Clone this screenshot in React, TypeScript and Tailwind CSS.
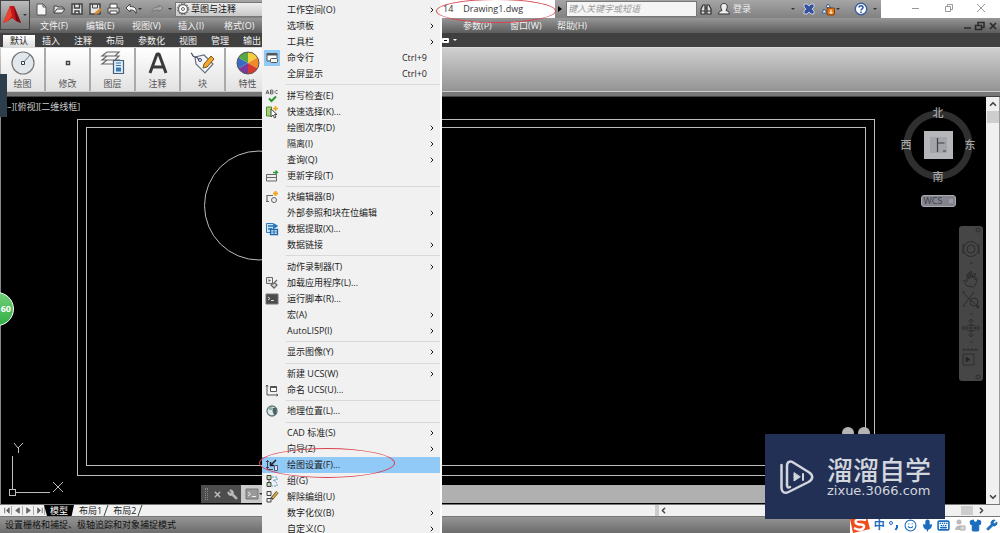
import type { ReactNode } from 'react';
import { ChevronDown, ChevronRight, ChevronUp, ChevronLeft, Keyboard, Mic, Shirt, Smile, Wrench, X } from 'lucide-react';

type IconName = keyof typeof menuIcons;

type MenuEntry = {
  label: string;
  icon?: IconName;
  shortcut?: string;
  submenu?: boolean;
  active?: boolean;
  checked?: boolean;
};

const menuIcons = {
  command: (
    <>
      <path d="M2 10V2.5h10V7" fill="#fff" stroke="#555" />
      <path d="M2 3.5h10" stroke="#555" strokeWidth="2" />
      <path d="M2 10h3" stroke="#555" />
      <rect x="5.5" y="7.5" width="7" height="4" rx="1" fill="#f4f4f4" stroke="#555" />
    </>
  ),
  spell: (
    <>
      <path d="M1 5l1.5-4L4 5M1.5 4h2M5.5 1v4h2l.7-1-.7-1h-2M7.5 3l.5-1-.5-1h-2M12.5 1.5H11l-1 1v1l1 1h1.5" stroke="#555" strokeWidth=".9" />
      <path d="M4 9.5L6.500 12 11 7.500" stroke="#27952c" strokeWidth="2" />
    </>
  ),
  quick: (
    <>
      <path d="M1.500 2h5v9h-5z" fill="#a6cf7b" stroke="#4c8d2d" />
      <path d="M6 4v8l2-2 1.500 3 1.500-1-1.500-2.500H12z" fill="#fff" stroke="#444" />
      <path d="M10.500 1v5M8 3.500h5" stroke="#e9a51f" strokeWidth="1.500" />
    </>
  ),
  field: (
    <>
      <path d="M1.500 5.500h10v3h-10zM1.500 8.500h10v3.500h-10z" fill="#eee" stroke="#666" />
      <path d="M8 3.500h4M10.500 1.500l2 2-2 1.500" stroke="#2f9b38" strokeWidth="1.300" />
    </>
  ),
  block: (
    <>
      <path d="M2 12V5.500h6M1 11.500h3" stroke="#666" strokeWidth="1.200" />
      <circle cx="9" cy="10" r="2.500" fill="#eee" stroke="#666" />
      <path d="M10.500 1v5M8 3.500h5" stroke="#f0a51c" strokeWidth="1.800" />
    </>
  ),
  extract: (
    <>
      <path d="M1.500 1.500h7v9h-7z" fill="#cfe5f7" stroke="#2f7cc0" />
      <path d="M3 4h8M9 2l3 2-3 2M3 7h4" stroke="#2272b9" strokeWidth="1.300" />
      <path d="M5.500 7.500h7v5h-7z" fill="#fff" stroke="#1b67af" strokeWidth="1.300" />
      <path d="M5.500 10h7M9 7.500v5" stroke="#1b67af" />
    </>
  ),
  load: (
    <>
      <path d="M1.500 1.500h6v6h-6z" fill="#eee" stroke="#666" />
      <path d="M3.500 3v3L6 4.500z" fill="#666" />
      <path d="M8 8l4-4M6 9l3 3 3-3-2.500-2.500z" fill="#ddd" stroke="#666" strokeWidth="1.300" />
    </>
  ),
  script: (
    <>
      <path d="M1 2h12v10H1z" fill="#4c4c4c" stroke="#777" />
      <path d="M3 5l2 1.500L3 8M6 8.500h3" stroke="#ddd" />
    </>
  ),
  ucs: (
    <>
      <path d="M2 2v10h11M1 3.500L2 2l1 1.500M11.500 11l1.500 1-1.500 1" stroke="#555" />
      <path d="M5.500 3.500h6v5h-6z" fill="#fff" stroke="#555" />
      <path d="M5.500 4h6" stroke="#555" strokeWidth="2" />
    </>
  ),
  globe: (
    <>
      <circle cx="7" cy="7" r="5" fill="#dfe8ea" stroke="#64777c" strokeWidth="1.300" />
      <path d="M3 4l3-1 2 1-1 2H4z" fill="#8fb0ac" />
      <path d="M8 4h3.500v6L9 11 7.500 7z" fill="#4c6468" />
    </>
  ),
  settings: (
    <>
      <path d="M2.500 2v9.500H8M1 3.500h3M1 9.500h3" stroke="#445" />
      <path d="M11 2L6 7M5.500 4v3.500H9" stroke="#222" strokeWidth="1.500" />
      <path d="M9.500 7.500h3v5h-3z" fill="#cfe6f7" stroke="#557" />
    </>
  ),
  group: (
    <>
      <path d="M2 1.500h4v4H2zM2 8.500h4v4H2z" fill="#b9d9a5" stroke="#444" />
      <path d="M4 5.500v3" stroke="#444" />
      <path d="M7 3h5v3H8l4 3v3H7" stroke="#5f9ac7" strokeDasharray="2 1" />
    </>
  ),
  ungroup: (
    <>
      <path d="M2 1.500h4v4H2zM2 8.500h4v3.500H2z" fill="#eee" stroke="#444" />
      <path d="M12.500 2L6.500 9" stroke="#5b4a2c" strokeWidth="3" />
      <path d="M12.500 2L7.500 8" stroke="#eab54b" strokeWidth="1.500" />
    </>
  ),
};

const menuGroups: MenuEntry[][] = [
  [
    { label: '工作空间(O)', submenu: true },
    { label: '选项板', submenu: true },
    { label: '工具栏', submenu: true },
    { label: '命令行', icon: 'command', shortcut: 'Ctrl+9', checked: true },
    { label: '全屏显示', shortcut: 'Ctrl+0' },
  ],
  [
    { label: '拼写检查(E)', icon: 'spell' },
    { label: '快速选择(K)...', icon: 'quick' },
    { label: '绘图次序(D)', submenu: true },
    { label: '隔离(I)', submenu: true },
    { label: '查询(Q)', submenu: true },
    { label: '更新字段(T)', icon: 'field' },
  ],
  [
    { label: '块编辑器(B)', icon: 'block' },
    { label: '外部参照和块在位编辑', submenu: true },
    { label: '数据提取(X)...', icon: 'extract' },
    { label: '数据链接', submenu: true },
  ],
  [
    { label: '动作录制器(T)', submenu: true },
    { label: '加载应用程序(L)...', icon: 'load' },
    { label: '运行脚本(R)...', icon: 'script' },
    { label: '宏(A)', submenu: true },
    { label: 'AutoLISP(I)', submenu: true },
  ],
  [{ label: '显示图像(Y)', submenu: true }],
  [
    { label: '新建 UCS(W)', submenu: true },
    { label: '命名 UCS(U)...', icon: 'ucs' },
  ],
  [{ label: '地理位置(L)...', icon: 'globe' }],
  [
    { label: 'CAD 标准(S)', submenu: true },
    { label: '向导(Z)', submenu: true },
    { label: '绘图设置(F)...', icon: 'settings', active: true },
    { label: '组(G)', icon: 'group' },
    { label: '解除编组(U)', icon: 'ungroup' },
    { label: '数字化仪(B)', submenu: true },
    { label: '自定义(C)', submenu: true },
  ],
];

function Svg({ size = 'size-[14px]', box = '0 0 14 14', children }: { size?: string; box?: string; children: ReactNode }) {
  return (
    <svg className={`${size} shrink-0`} viewBox={box} fill="none" aria-hidden="true">
      {children}
    </svg>
  );
}

function ToolsMenu() {
  return (
    <div role="menu" className="absolute top-0 -bottom-1 left-[262px] z-20 flex w-[180px] flex-col border-r-2 border-white bg-[#f1f1f1] pt-[2px] text-[#1c1c1c]">
      {menuGroups.map((group, i) => (
        <div key={i} className="contents">
          {i > 0 && (
            <div className="ml-[24px] flex min-h-[5px] flex-1 items-center">
              <hr className="w-full border-[#d9d9d9]" />
            </div>
          )}
          {group.map((item) => (
            <button
              key={item.label}
              role="menuitem"
              className={`flex h-4 w-full shrink-0 items-center text-left ${item.active ? 'bg-[#91c9f7]' : ''}`}
            >
              <span className="flex w-[25px] shrink-0 pl-[2px]">
                {item.icon && (
                  <span className={`flex size-4 items-center justify-center ${item.checked ? 'bg-[#91c9f7]' : ''}`}>
                    <Svg>{menuIcons[item.icon]}</Svg>
                  </span>
                )}
              </span>
              <span className="flex-1 whitespace-nowrap">{item.label}</span>
              {item.shortcut && <span className="pr-[13px]">{item.shortcut}</span>}
              {item.submenu && <ChevronRight className="mr-1 size-2" strokeWidth={3} />}
            </button>
          ))}
        </div>
      ))}
    </div>
  );
}

function Caret() {
  return <span className="h-0 w-0 border-x-2 border-t-2 border-x-transparent border-t-[#333]" />;
}

function QuickAccess() {
  return (
    <div className="flex w-[442px] shrink-0 items-center pl-[34px]">
      <div className="flex w-[141px] items-center gap-[2px]">
        <button aria-label="新建" className="w-4">
          <Svg><path d="M3 2h6l3 3v8H3z" fill="#f6f6f6" stroke="#555" /><path d="M9 2v3h3" stroke="#555" /></Svg>
        </button>
        <button aria-label="打开" className="w-4">
          <Svg><path d="M2 11V4h3l1 1h5v2" fill="#ddd" stroke="#444" /><path d="M2 11l3-4h8l-3 4z" fill="#f2f2f2" stroke="#444" /></Svg>
        </button>
        <button aria-label="保存" className="w-4">
          <Svg><path d="M2 2h10v10H2z" fill="#e6e6e6" stroke="#444" strokeWidth="1.500" /><path d="M4.500 2v4h5V2M5 12V9h4v3" stroke="#444" strokeWidth="1.500" /></Svg>
        </button>
        <button aria-label="另存为" className="w-4">
          <Svg><path d="M2 2h10v10H2z" fill="#e6e6e6" stroke="#444" strokeWidth="1.500" /><path d="M4.500 2v4h5V2" stroke="#444" /><path d="M7 12l6-5" stroke="#d98a2f" strokeWidth="2.500" /></Svg>
        </button>
        <button aria-label="打印" className="w-4">
          <Svg><path d="M4 6V2h7v4" fill="#fff" stroke="#444" /><path d="M2 6h11v5H2z" fill="#ddd" stroke="#444" /><path d="M4 9h7v3H4z" fill="#fff" stroke="#444" /></Svg>
        </button>
        <button aria-label="放弃" className="flex w-6 items-center">
          <Svg><path d="M2 6l4-4v2.500c5 0 7 2 6 7-1-3-3-3.500-6-3.500v2z" fill="#f4f4f4" stroke="#444" /></Svg>
          <Caret />
        </button>
        <button aria-label="重做" className="flex w-6 items-center gap-1">
          <Svg><path d="M13 6L9 3v2C4 5 2 7 2 10c2-2 4-2 7-2v2z" fill="#aaa" stroke="#777" /></Svg>
          <Caret />
        </button>
      </div>
      <button className="flex h-[15px] flex-1 items-center gap-[1px] border border-[#777] bg-gradient-to-b from-[#eee] to-[#c8c8c8] text-[#111]">
        <Svg>
          <circle cx="7" cy="7" r="4.500" fill="#fff" stroke="#666" strokeWidth="1.300" />
          <circle cx="7" cy="7" r="5.700" stroke="#666" strokeDasharray="1.500 1.500" />
          <circle cx="7" cy="7" r="1.500" stroke="#666" />
        </Svg>
        草图与注释
      </button>
    </div>
  );
}

function TitleBar() {
  return (
    <div className="flex h-[18px] bg-gradient-to-b from-[#a5a5a5] to-[#818181]">
      <QuickAccess />
      <div className="flex w-[113px] shrink-0 items-center gap-[10px] bg-white pl-[1px] text-[#333]">
        <span>14</span>
        <h1>Drawing1.dwg</h1>
      </div>
      <div className="flex min-w-0 flex-1 items-center text-[#eee]">
        <span className="mx-[3px] h-0 w-0 border-y-[3px] border-l-4 border-y-transparent border-l-black" />
        <input aria-label="搜索" placeholder="键入关键字或短语" className="ml-[1px] h-4 w-[131px] min-w-0 border border-[#777] bg-[#f4f4f4] px-[1px] italic placeholder:text-[#999]" />
        <button aria-label="查找" className="ml-[2px] flex">
          <Svg>
            <path d="M2 12V7l2-4h2v9zM12 12V7l-2-4H8v9zM6 6h2" fill="#ddd" stroke="#333" strokeWidth="1.200" />
            <path d="M2 9h4M8 9h4" stroke="#333" />
          </Svg>
        </button>
        <button className="ml-[4px] flex items-center gap-[2px]">
          <Svg>
            <path d="M1.500 12c0-3 3-3 3.500-3.500C2 3 5 1.500 7 1.500s5 1.500 2 7c.5.500 3.500.500 3.500 3.500z" fill="#eee" stroke="#333" />
          </Svg>
          登录
        </button>
        <div className="ml-auto flex items-center">
          <Caret />
          <button aria-label="Exchange" className="ml-[7px] flex">
            <Svg><path d="M2 2h3l2 2 2-2h3v3l-2 2 2 2v3H9l-2-2-2 2H2V9l2-2-2-2z" fill="#35539c" stroke="#c4cde4" /></Svg>
          </button>
          <button aria-label="连接" className="ml-[5px] flex items-center gap-[1px]">
            <Svg>
              <path d="M1 11l2-4 3 4zM5 5l2-3 3 4z" fill="#fff" stroke="#335e95" />
              <rect x="6" y="6" width="7.500" height="7" rx="1" fill="#e47711" stroke="#84410a" />
              <path d="M10 7.500v4M8.500 10l1.500 1.500 1.500-1.500" stroke="#fff" />
            </Svg>
            <Caret />
          </button>
          <button aria-label="帮助" className="ml-[14px] flex items-center gap-[5px]">
            <Svg>
              <circle cx="7" cy="7" r="5.700" fill="#fff" stroke="#385f9e" strokeWidth="1.400" />
              <path d="M5 5.500c0-2.500 4-2.500 4 0C9 7 7 7 7 8.500M7 9.500V11" stroke="#2350a0" strokeWidth="1.500" />
            </Svg>
            <Caret />
          </button>
        </div>
        <div className="ml-[4px] flex h-full w-[119px] shrink-0 items-center justify-between bg-white px-3 pl-[28px] pb-[2px] text-[#999]">
          <button aria-label="最小化" className="flex"><Svg><path d="M3 7.500h7" stroke="currentColor" /></Svg></button>
          <button aria-label="还原" className="flex"><Svg><path d="M3.500 5.500h5v5h-5zM5.500 5V3.500h5v5H9" stroke="currentColor" /></Svg></button>
          <button aria-label="关闭" className="flex"><Svg><path d="M3 3l8 8M11 3l-8 8" stroke="currentColor" /></Svg></button>
        </div>
      </div>
    </div>
  );
}

function MenuBar() {
  return (
    <nav className="flex h-[15px] items-center bg-gradient-to-b from-[#979797] to-[#5c5c5c] text-[#f2f2f2]">
      <div className="flex w-[463px] shrink-0 pl-[40px]">
        {['文件(F)', '编辑(E)', '视图(V)', '插入(I)', '格式(O)'].map((m) => (
          <button key={m} className="w-[46px] text-left">{m}</button>
        ))}
      </div>
      <div className="flex flex-1">
        {['参数(P)', '窗口(W)', '帮助(H)'].map((m) => (
          <button key={m} className="w-[47px] text-left">{m}</button>
        ))}
      </div>
      <div className="flex items-center pr-[1px] text-[#2a2a2a]">
        <button aria-label="最小化图形" className="flex"><Svg><path d="M5 9h7" stroke="currentColor" strokeWidth="1.500" /></Svg></button>
        <button aria-label="还原图形" className="flex"><Svg><path d="M2.500 6.500h6v4h-6zM5 6V3.500h6v5H9" stroke="currentColor" strokeWidth="1.500" /></Svg></button>
        <button aria-label="关闭图形" className="flex"><Svg size="size-3"><path d="M3.500 3.500l7 7M10.500 3.500l-7 7" stroke="currentColor" strokeWidth="2" /></Svg></button>
      </div>
    </nav>
  );
}

const ribbonPanels = [
  {
    name: '绘图',
    icon: (
      <>
        <circle cx="13" cy="13" r="11" fill="#e3e8ed" stroke="#777" strokeWidth="1.200" />
        <path d="M13 13l7-8" stroke="#6c7a88" />
        <path d="M11.500 11.500h3v3h-3z" fill="#fff" stroke="#345" />
      </>
    ),
  },
  { name: '修改', icon: <path d="M11.500 11.500h3v3h-3z" fill="#fff" stroke="#444" strokeWidth="1.500" /> },
  {
    name: '图层',
    icon: (
      <>
        <path d="M2 14l5-4h12l-4 4zM2 10l5-4h12l-4 4zM2 6l5-4h12l-4 4z" fill="#f5f5f5" stroke="#666" strokeWidth="1.200" />
        <path d="M13.500 10.500h10v13h-10z" fill="#dcebf7" stroke="#4a6078" strokeWidth="1.200" />
        <path d="M16 13h5M16 15.500h5" stroke="#3c78ae" strokeWidth="1.200" />
        <path d="M16 17.500h5v4h-5z" fill="#3c78ae" />
      </>
    ),
  },
  { name: '注释', icon: <path d="M5 23l7-19h2l7 19M8 17h10" stroke="#3a3a3a" strokeWidth="3" strokeLinejoin="bevel" /> },
  {
    name: '块',
    icon: (
      <>
        <path d="M5 7l9-2 9 9-8 9-9-9z" fill="#f3f5f7" stroke="#647180" strokeWidth="1.200" />
        <path d="M1 3c2 1 1 4 4 4s3 2 4 3" stroke="#446" strokeWidth="1.200" />
        <circle cx="10" cy="10" r="1.500" stroke="#446" />
        <path d="M21 6L14 14l-1 4 4-1 7-8z" fill="#f2aa2c" stroke="#80551a" />
      </>
    ),
  },
  {
    name: '特性',
    icon: (
      <>
        <path d="M13 13V2A11 11 0 0 1 22.500 7.500z" fill="#f4cf3f" />
        <path d="M13 13l9.500-5.500a11 11 0 0 1 0 11z" fill="#f08a2b" />
        <path d="M13 13l9.500 5.500A11 11 0 0 1 13 24z" fill="#d5392f" />
        <path d="M13 13v11a11 11 0 0 1-9.500-5.500z" fill="#7b3a99" />
        <path d="M13 13l-9.500 5.500a11 11 0 0 1 0-11z" fill="#3a6cc4" />
        <path d="M13 13L3.500 7.500A11 11 0 0 1 13 2z" fill="#56a944" />
        <circle cx="13" cy="13" r="11" stroke="#555" />
      </>
    ),
  },
];

function Ribbon() {
  return (
    <>
      <div className="flex h-[14px] items-end bg-[#404040] pl-[3px] text-[#f2f2f2]">
        <div className="flex w-[439px] shrink-0 items-center gap-[14px]">
          <button className="-mr-[7px] h-3 bg-gradient-to-b from-white to-[#ddd] px-[7px] leading-3 text-[#222]">默认</button>
          {['插入', '注释', '布局', '参数化', '视图', '管理', '输出'].map((t) => (
            <button key={t} className="leading-3">{t}</button>
          ))}
        </div>
        <button aria-label="最小化功能区" className="flex h-full items-center gap-1">
          <span className="flex h-[5px] w-[7px] items-center justify-center rounded-[1px] bg-white">
            <span className="h-px w-[3px] bg-black" />
          </span>
          <span className="h-0 w-0 border-x-2 border-t-2 border-x-transparent border-t-white" />
        </button>
      </div>
      <div className="flex h-[44px] border-t border-[#ddd] bg-gradient-to-b from-[#d0d0d0] to-[#949494] pl-[1px]">
        {ribbonPanels.map((p) => (
          <button key={p.name} className="flex w-[45px] shrink-0 flex-col items-center border-r-2 border-[#aaa] bg-gradient-to-b from-white to-[#e2e2e2] pt-[2px] text-[#555]">
            <Svg size="size-[26px]" box="0 0 26 26">{p.icon}</Svg>
            <span className="pt-[2px] leading-3">{p.name}</span>
          </button>
        ))}
      </div>
      <div className="h-[6px] border-t border-b border-t-[#ccc] border-b-[#444] bg-[#777]" />
    </>
  );
}

function ViewCube() {
  return (
    <div className="absolute top-[7px] right-[10px] flex w-[76px] flex-col items-center text-[#a5a5a5]">
      <svg className="h-[80px] w-[76px] text-[11px] font-medium" viewBox="0 0 76 80" fill="none">
        <circle cx="38" cy="41" r="31" stroke="#2f2f2f" strokeWidth="7" />
        <path d="M24 27h29v28H24z" fill="#b4b6b9" />
        <path d="M30 33h17v16H30z" fill="#a3a5aa" />
        <path d="M37.500 34v14M37.500 39h7M43 47h3" stroke="#3d3f44" strokeWidth="1.200" />
        <text x="38" y="13" textAnchor="middle" fill="currentColor">北</text>
        <text x="38" y="77" textAnchor="middle" fill="currentColor">南</text>
        <text x="6" y="45" textAnchor="middle" fill="currentColor">西</text>
        <text x="70" y="45" textAnchor="middle" fill="currentColor">东</text>
      </svg>
      <button className="mt-[11px] flex h-3 w-[35px] items-center justify-between rounded-[3px] border border-[#aaaab4] bg-[#84848e] px-[2px] text-[9px] leading-[10px] text-[#3c3c44]">
        WCS
        <span className="size-1 bg-[#9c9ca6]" />
      </button>
    </div>
  );
}

function NavBar() {
  return (
    <div className="absolute top-[129px] right-[3px] h-[155px] w-6 rounded-[3px] bg-[#464646]">
      <svg className="h-full w-full" viewBox="0 0 24 155" fill="none" stroke="#2c2c2c">
        <circle cx="19" cy="4" r="2" />
        <circle cx="12" cy="23" r="4" />
        <circle cx="12" cy="23" r="7.500" />
        <path d="M4 18v10M20 18v10M11 37h3" />
        <path d="M8 60c-2-3-4-4-3-6l3 2v-8l2 5v-7l2 6v-7l2 7 2-5v7l2-2c0 5-2 8-4 9z" />
        <path d="M4 67l12 11M15 66L5 79M3 66h3M3 80h3" />
        <circle cx="15" cy="76" r="4" />
        <path d="M17 79l3 3" strokeWidth="2" />
        <path d="M11 88h3M11 116h3" />
        <path d="M12 93v18M4 102h16M9 96l3-3 3 3M9 108l3 3 3-3M6 99l-3 3 3 3M18 99l3 3-3 3" />
        <ellipse cx="12" cy="102" rx="5" ry="3" />
        <path d="M3 124h16M5 124v-2M9 124v-2M13 124v-2M17 124v-2M4 128h11v11H4z" />
        <path d="M7 131v5l4-2.500z" fill="#222" />
        <circle cx="19" cy="151" r="2" />
      </svg>
    </div>
  );
}

function Canvas() {
  return (
    <main className="relative min-w-0 flex-1 overflow-hidden border-l border-[#888] bg-black">
      <svg className="absolute top-0 left-0 h-[407px] w-[985px]" viewBox="1 97 985 407" fill="none" stroke="#bdbdbd" shapeRendering="crispEdges">
        <path d="M77.500 119.500h797v356h-797zM86.500 127.500h779v338h-779z" />
        <circle cx="259" cy="205.500" r="54.500" shapeRendering="auto" />
        <path d="M12.500 456v33M16 492.500h34M9.500 489.500h6v6h-6z" />
        <path d="M14 443l4 5 5-5M18.500 448v5M53 482l10 10M63 482l-10 10" shapeRendering="auto" />
      </svg>
      <p className="absolute top-[4px] left-[6px] leading-3 text-[#ccc]">–][俯视][二维线框]</p>
      <ViewCube />
      <NavBar />
      {/* floating command line */}
      <div className="absolute right-[200px] bottom-[1px] left-[200px] flex h-[18px] bg-[#b0b0b0]">
        <div className="flex w-10 items-center gap-[5px] bg-[#4d4d4d] pl-1 text-[#bbb]">
          <span className="h-3 w-[3px] border-x border-dotted border-[#888]" />
          <X className="size-[9px]" strokeWidth={4} />
          <Wrench className="size-[11px] -scale-x-100" fill="currentColor" />
        </div>
        <label className="flex flex-1 items-center bg-gradient-to-r from-[#ccc] to-[#b0b0b0] to-20% pl-1">
          <Svg><path d="M1 2h12v10H1z" fill="#999" stroke="#777" /><path d="M3 5l2.500 2L3 9M7 9.500h4" stroke="#eee" /></Svg>
          <Caret />
          <input aria-label="命令行" className="min-w-0 flex-1" />
        </label>
      </div>
    </main>
  );
}

function SheetTabs() {
  return (
    <div className="flex h-[13px] border-y border-[#777] bg-[#f1f1f1]">
      <div className="flex w-[655px] shrink-0 text-[#222]">
        <div className="flex w-[44px] items-center gap-[1px] pl-[2px] text-[#666]">
          {['M3 2v6M8 2L5 5l3 3z', 'M7 2L3 5l4 3z', 'M3 2l4 3-4 3z', 'M8 2v6M3 2l3 3-3 3z'].map((d) => (
            <button key={d} className="flex border-r border-[#aaa]">
              <Svg size="size-[9px]" box="0 0 10 10"><path d={d} fill="currentColor" stroke="currentColor" /></Svg>
            </button>
          ))}
        </div>
        <button className="h-full bg-black px-[6px] leading-[11px] text-white [clip-path:polygon(0_0,100%_0,92%_100%,10%_100%)]">模型</button>
        <button className="pl-[5px] leading-[11px]">布局1</button>
        <svg className="h-full w-2" viewBox="0 0 8 11"><path d="M2 11L6 0" stroke="#444" /></svg>
        <button className="pl-[3px] leading-[11px]">布局2</button>
        <svg className="h-full w-2" viewBox="0 0 8 11"><path d="M2 11L6 0" stroke="#444" /></svg>
      </div>
      <div className="flex flex-1 items-center justify-between border-l-4 border-[#ccc] pr-[14px] text-[#444]">
        <ChevronLeft className="size-[9px]" strokeWidth={4} />
        <div className="flex h-full items-center gap-1">
          <span className="h-[9px] w-3 bg-[#cdcdcd]" />
          <ChevronRight className="size-[9px]" strokeWidth={4} />
        </div>
      </div>
    </div>
  );
}

function StatusBar() {
  return (
    <footer className="flex h-4 items-center justify-between bg-gradient-to-b from-[#959595] to-[#6d6d6d]">
      <p className="pl-[5px] text-[#111]">设置栅格和捕捉、极轴追踪和对象捕捉模式</p>
      <div className="flex h-full w-[150px] items-center justify-between bg-white pr-[2px] text-[#1c6dbd]">
        <Svg size="h-4 w-5" box="0 0 20 16">
          <path d="M0 2L17 0l3 12-17 4z" fill="#ee4d1c" />
          <path d="M16 3C9 1 4 3 6 6s9 0 8 4-6 3-10 1" stroke="#fff" strokeWidth="2.500" />
        </Svg>
        <span className="text-[11px] leading-4 font-bold">中</span>
        <Svg size="size-3" box="0 0 12 12">
          <circle cx="3" cy="4" r="1.500" stroke="currentColor" />
          <path d="M9 6v2.500L7.500 11" stroke="currentColor" strokeWidth="2" />
        </Svg>
        <Smile className="size-[13px]" />
        <Mic className="size-[13px]" fill="currentColor" />
        <Keyboard className="size-[13px]" strokeWidth={3} />
        <Svg size="size-3" box="0 0 12 12">
          <circle cx="5" cy="3" r="2.500" fill="#bbb" />
          <path d="M1 11c0-6 8-6 8 0z" fill="#bbb" />
          <path d="M6 7h5v4H6z" fill="#ddd" stroke="#aaa" />
        </Svg>
        <Shirt className="size-[13px]" fill="currentColor" />
        <Wrench className="size-3" fill="currentColor" />
      </div>
    </footer>
  );
}

function Watermark() {
  return (
    <div className="absolute right-[55px] bottom-[14px] z-30 flex h-[85px] w-[180px] items-center gap-3 bg-[#223056] pl-[14px] text-[#d3d6dc]">
      <svg className="h-9 w-9 shrink-0" viewBox="0 0 36 36" fill="none" stroke="currentColor" strokeWidth="2.500" strokeLinecap="round" strokeLinejoin="round">
        <path d="M2.500 6v23c0 4 3 6 7 4l20-10c5-3 5-7 0-10L15 4c-4-3-7-1-7 3v19" />
        <path d="M8 26c0 2 1 3 3 2" />
        <path d="M15 14v8l6-4z" fill="currentColor" strokeWidth="1" />
        <path d="M24 15v6" strokeWidth="2" />
      </svg>
      <div className="pb-1 whitespace-nowrap">
        <p className="font-['Noto_Sans_CJK_SC',sans-serif] text-[26px] leading-8 font-medium">溜溜自学</p>
        <p className="font-['DejaVu_Sans',sans-serif] text-[13px] leading-3">zixue.3066.com</p>
      </div>
    </div>
  );
}

export default function App() {
  return (
    <div className="relative flex h-screen flex-col overflow-hidden bg-black font-['Open_Sans','Noto_Sans_CJK_SC',sans-serif] text-[9px] leading-4">
      <header className="relative">
        <TitleBar />
        <MenuBar />
        <Ribbon />
        <button aria-label="应用程序菜单" className="absolute top-0 left-0 flex h-[30px] w-[30px] items-center border border-[#444] bg-gradient-to-b from-[#bbb] to-[#777]">
          <Svg size="h-6 w-[22px]" box="0 0 22 24">
            <path d="M2 20L9 3h4l7 17-5-2-4-3-4 3z" fill="#c4161c" />
            <path d="M9 3l2 10-4 5-5 2z" fill="#e8432f" />
            <path d="M13 3l7 17-5-2z" fill="#7d0c10" />
          </Svg>
          <Caret />
        </button>
      </header>

      <div className="flex min-h-0 flex-1">
        <Canvas />
        <div className="flex w-[14px] flex-col items-center justify-between border-r border-[#999] bg-[#f0f0f0] py-[2px] text-[#444]">
          <div className="flex w-full flex-col items-center gap-[2px]">
            <ChevronUp className="size-[10px]" strokeWidth={4} />
            <span className="h-3 w-3 bg-[#cdcdcd]" />
          </div>
          <ChevronDown className="size-[10px]" strokeWidth={4} />
        </div>
      </div>
      <SheetTabs />
      <StatusBar />

      <ToolsMenu />

      {/* docked palette handle and the floating helper ball */}
      <div className="absolute top-[74px] left-0 h-[43px] w-[7px] bg-[#2c3d4c]" />
      <div className="absolute top-[292px] -left-5 flex size-[34px] items-center justify-end rounded-full border border-white bg-gradient-to-b from-[#6fd078] to-[#2fae45] pr-[2px] font-bold text-white">60</div>

      <div className="absolute right-[130px] bottom-[94px] flex gap-1">
        <span className="size-3 rounded-full bg-[#b5b5b5]" />
        <span className="size-3 rounded-full bg-[#b5b5b5]" />
      </div>
      <Watermark />

      {/* red pen marks */}
      <div className="pointer-events-none absolute -top-[1px] left-[436px] z-30 h-6 w-[120px] rounded-[50%] border border-[#d9434e]" />
      <div className="pointer-events-none absolute bottom-[55px] left-[259px] z-30 h-[30px] w-[136px] rounded-[50%] border border-[#d9434e]" />
    </div>
  );
}
